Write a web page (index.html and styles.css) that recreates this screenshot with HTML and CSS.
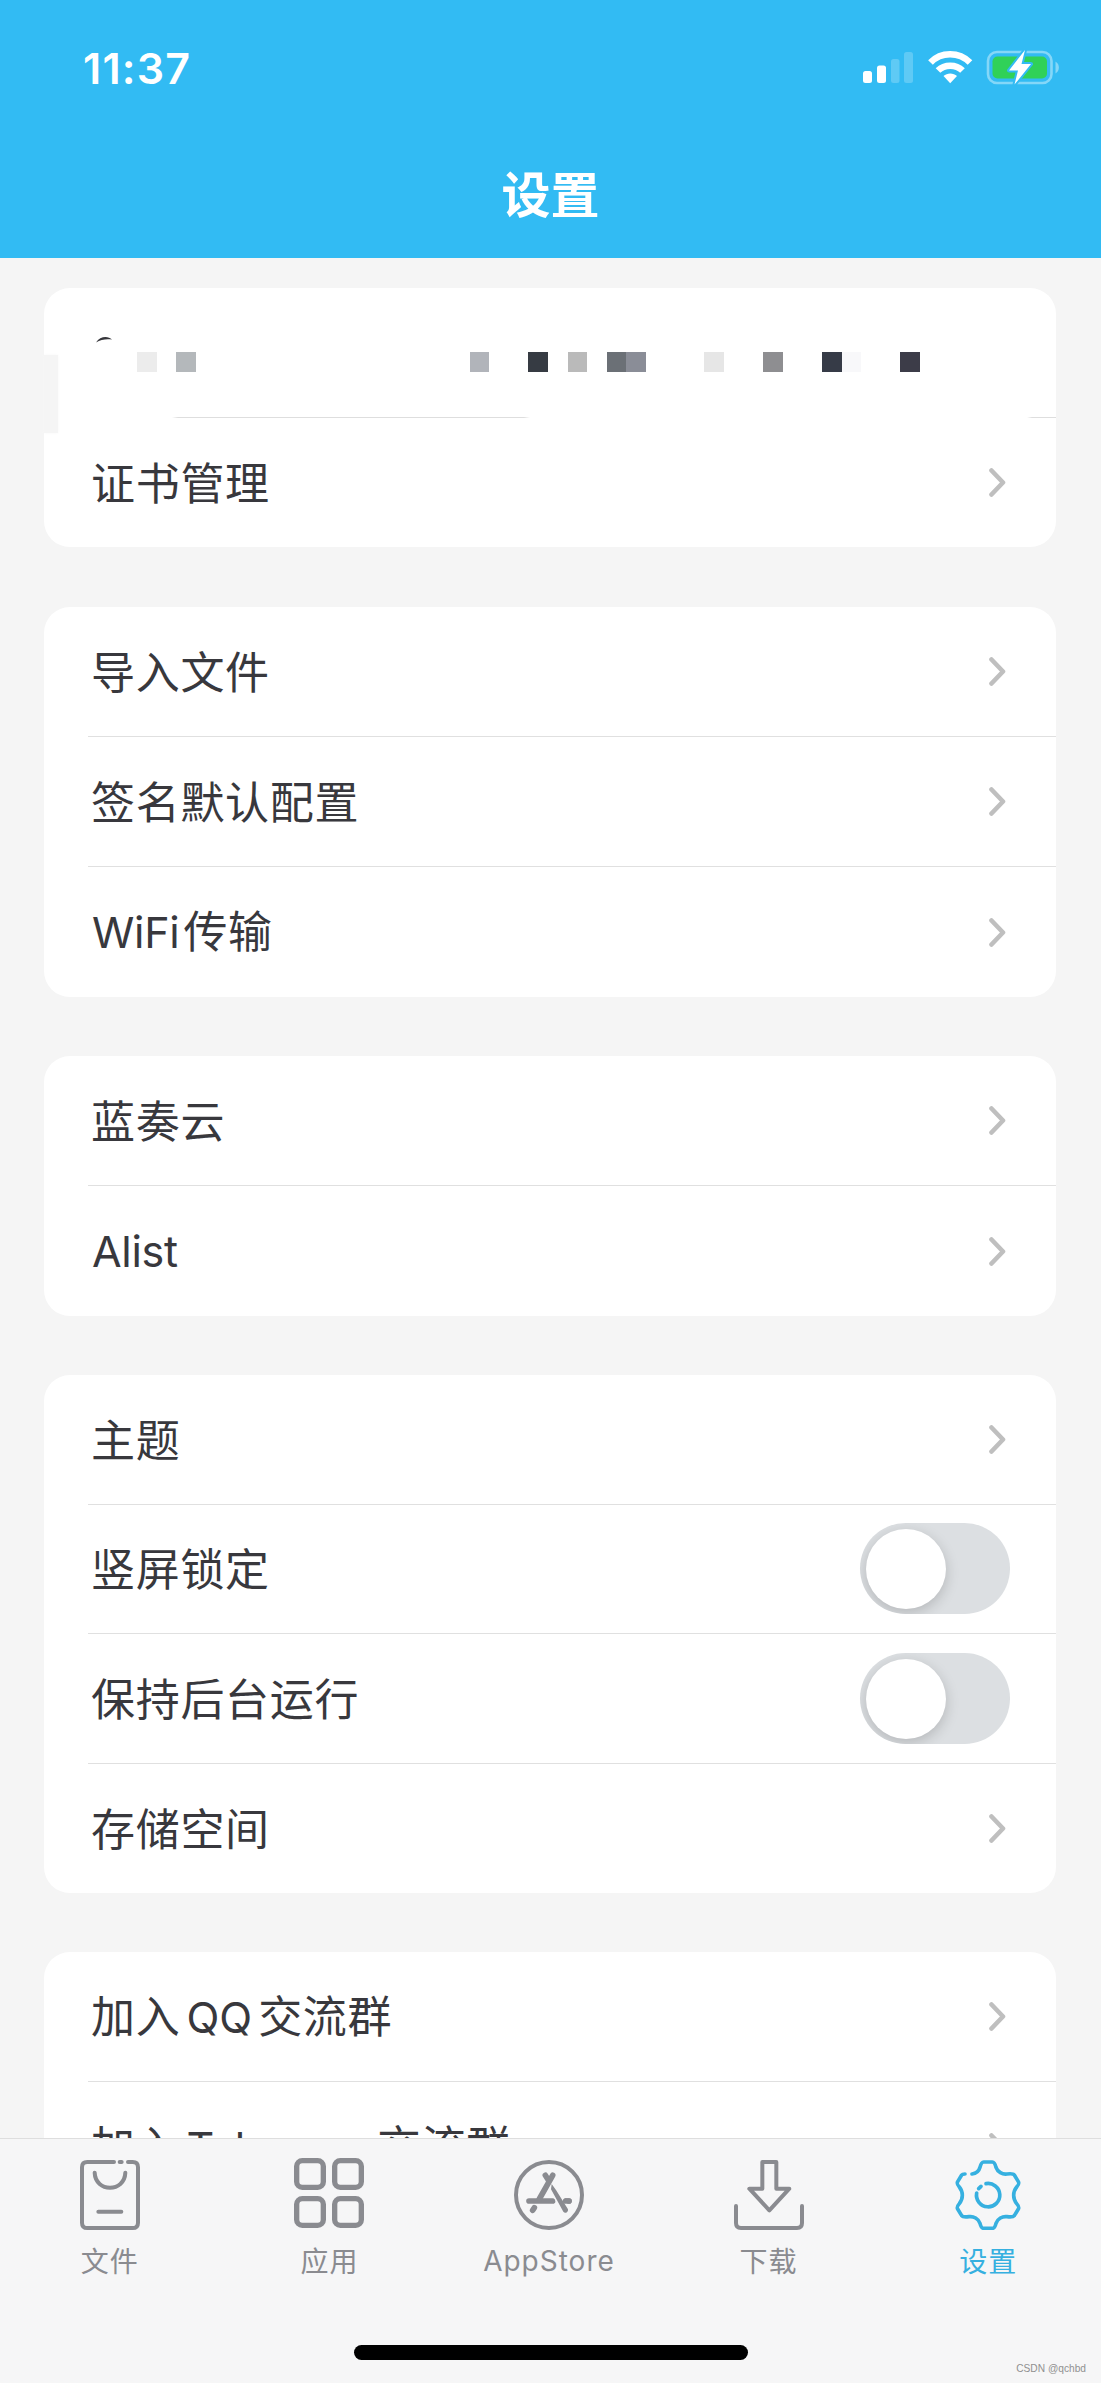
FILE: index.html
```html
<!DOCTYPE html>
<html lang="zh-CN">
<head>
  <meta charset="UTF-8">
  <title>设置</title>
  <link rel="stylesheet" href="styles.css">
</head>
<body>

  <svg class="defs" width="0" height="0">
    <symbol id="chevron" viewBox="0 0 17 29">
      <path d="M2.5 2.5 L14 14.5 L2.5 26.5" fill="none" stroke="currentColor" stroke-width="4.6" stroke-linecap="round" stroke-linejoin="round"/>
    </symbol>
  </svg>

  <header class="header">
    <div class="status">
      <span class="time">11:37</span>
      <svg class="status-icons" width="198" height="36" viewBox="862 50 198 36">
        <!-- 信号 -->
        <g fill="#fff">
          <rect x="863" y="71" width="9" height="12" rx="2.5"/>
          <rect x="877" y="65.5" width="9" height="17.5" rx="2.5"/>
          <rect x="891" y="59" width="8.5" height="24" rx="2.5" opacity=".22"/>
          <rect x="904" y="52" width="9" height="31" rx="2.5" opacity=".22"/>
        </g>
        <!-- wifi -->
        <g fill="none" stroke="#fff" stroke-width="6.5">
          <path d="M930.5 62.5 C941 51.5 959 51.5 970 62.5"/>
          <path d="M938 70.5 C944.5 64 956 64 962.5 70.5"/>
        </g>
        <path d="M943.5 76 C947 72.5 953.5 72.5 957 76 L950.2 83.3 Z" fill="#fff"/>
        <!-- 电池 -->
        <rect x="988" y="52" width="63.5" height="31" rx="9" fill="none" stroke="#84d7f8" stroke-width="2.6"/>
        <rect x="992.5" y="56.5" width="54.5" height="22" rx="5" fill="#30d158"/>
        <path d="M1055.5 61.5 C1060 64 1060 71 1055.5 73.5 Z" fill="#84d7f8"/>
        <path d="M1025 50 L1009 70.5 H1018 L1014.5 84.5 L1031 64 H1021.5 Z" fill="#fff" stroke="#32bbf3" stroke-width="4" paint-order="stroke" stroke-linejoin="round"/>
      </svg>
    </div>
    <h1 class="title">设置</h1>
  </header>

  <main class="content">
    <section class="card card-account">
      <div class="row masked">
        <svg width="1012" height="128" viewBox="44 288 1012 128">
          <path d="M96 342.5 C100 336 108 335.5 112 339.5 C106 338.8 101 339.5 96 342.5 Z" fill="#36363b"/>
          <rect x="137" y="352" width="20" height="20" fill="#ececec"/>
          <rect x="176" y="352" width="20" height="20" fill="#b4b8bb"/>
          <rect x="470" y="352" width="19" height="20" fill="#b1b4ba"/>
          <rect x="528" y="352" width="20" height="20" fill="#363b43"/>
          <rect x="568" y="352" width="19" height="20" fill="#bababa"/>
          <rect x="607" y="352" width="19" height="20" fill="#6b7076"/>
          <rect x="626" y="352" width="20" height="20" fill="#8a8d97"/>
          <rect x="704" y="352" width="20" height="20" fill="#e6e6e6"/>
          <rect x="763" y="352" width="20" height="20" fill="#8e8e91"/>
          <rect x="822" y="352" width="20" height="20" fill="#363b47"/>
          <rect x="842" y="352" width="19" height="20" fill="#f8f8fa"/>
          <rect x="900" y="352" width="20" height="20" fill="#3c3c48"/>
        </svg>
        <div class="broken-line"></div>
      </div>
      <div class="row"><span>证书管理</span><svg class="chevron"><use href="#chevron"/></svg></div>
      <div class="notch"></div>
    </section>

    <section class="card card-files">
      <div class="row"><span>导入文件</span><svg class="chevron"><use href="#chevron"/></svg></div>
      <div class="row"><span>签名默认配置</span><svg class="chevron"><use href="#chevron"/></svg></div>
      <div class="row"><span><span class="latin first">WiFi</span>传输</span><svg class="chevron"><use href="#chevron"/></svg></div>
    </section>

    <section class="card card-cloud">
      <div class="row"><span>蓝奏云</span><svg class="chevron"><use href="#chevron"/></svg></div>
      <div class="row"><span><span class="latin first">Alist</span></span><svg class="chevron"><use href="#chevron"/></svg></div>
    </section>

    <section class="card card-general">
      <div class="row"><span>主题</span><svg class="chevron"><use href="#chevron"/></svg></div>
      <div class="row"><span>竖屏锁定</span><span class="switch"></span></div>
      <div class="row"><span>保持后台运行</span><span class="switch"></span></div>
      <div class="row"><span>存储空间</span><svg class="chevron"><use href="#chevron"/></svg></div>
    </section>

    <section class="card card-groups">
      <div class="row"><span>加入<span class="latin">QQ</span>交流群</span><svg class="chevron"><use href="#chevron"/></svg></div>
      <div class="row"><span>加入<span class="latin telegram">Telegram</span>交流群</span><svg class="chevron"><use href="#chevron"/></svg></div>
    </section>
  </main>

  <nav class="tabbar">
    <a class="tab">
      <svg class="tab-icon" viewBox="0 0 210 210" stroke-width="12">
        <path d="M117 6 H37 Q21 6 21 22 V188 Q21 204 37 204 H173 Q189 204 189 188 V22 Q189 6 173 6 H159"/>
        <path d="M134 6 H140 M59 38 C61 98 149 98 151 38 M70 155 H139"/>
      </svg>
      <span>文件</span>
    </a>
    <a class="tab">
      <svg class="tab-icon icon-apps" viewBox="0 0 210 210" stroke-width="16">
        <rect x="8" y="8" width="80" height="80" rx="17"/>
        <rect x="122" y="8" width="80" height="80" rx="17"/>
        <rect x="8" y="122" width="80" height="80" rx="17"/>
        <rect x="122" y="122" width="80" height="80" rx="17"/>
      </svg>
      <span>应用</span>
    </a>
    <a class="tab">
      <svg class="tab-icon" viewBox="0 0 210 210" stroke-width="17">
        <circle cx="105" cy="105" r="99" stroke-width="12"/>
        <path d="M45 123 H116 M148 123 H165"/>
        <path d="M116 46 L76 117 M94 46 L103 60"/>
        <path d="M61 143 L56 151"/>
        <path d="M119 84 L155 150" stroke="#f6f6f7" stroke-width="27" stroke-linecap="butt"/>
        <path d="M113 72 L126 90 L162 148 A8 8 0 0 1 148 155 L111 88 Z" fill="currentColor" stroke="none"/>
        <path d="M155 123 H165"/>
      </svg>
      <span class="latin-label">AppStore</span>
    </a>
    <a class="tab">
      <svg class="tab-icon" viewBox="0 0 210 210" stroke-width="12">
        <path d="M85 6 H127 V86 H166 L106 151 L46 86 H85 Z"/>
        <path d="M6 138 V189 Q6 204 21 204 H189 Q204 204 204 189 V138"/>
      </svg>
      <span>下载</span>
    </a>
    <a class="tab active">
      <svg class="tab-icon" viewBox="0 0 210 210" stroke-width="11">
        <path d="M57 42 C68 41 78 33 81 22 C84 10 86 6 92 6 H118 C124 6 126 10 129 22 C134 36 148 44 162 42 C177 40 181 41 184 45 L196 65 C199 70 198 73 191 81 C179 96 179 116 191 131 C198 139 199 142 196 147 L184 167 C181 171 177 172 162 170 C148 168 134 176 129 190 C126 202 124 205 118 205 H92 C86 205 84 202 81 190 C76 176 62 168 48 170 C33 172 29 171 26 167 L14 147 C11 142 12 139 19 131 C31 116 31 96 19 81 C12 73 11 70 14 65 L26 45 C28 42 30 42 36 42"/>
        <path d="M99 71 A35 35 0 1 1 71 99 M77 86 L84 79"/>
      </svg>
      <span>设置</span>
    </a>
    <div class="home-indicator"></div>
    <span class="watermark">CSDN @qchbd</span>
  </nav>

</body>
</html>
```
FILE: styles.css
```css
* {
  box-sizing: border-box;
}

body {
  margin: 0;
  width: 1101px;
  height: 2383px;
  display: flex;
  flex-direction: column;
  overflow: hidden;
  background-color: #f5f5f5;
  color: #38383d;
  font-family: "Noto Sans CJK SC", sans-serif;
}

.defs {
  position: absolute;
}

.header {
  height: 258px;
  background-color: #32bbf3;
  color: #fff;
}

.status {
  display: flex;
  justify-content: space-between;
  align-items: center;
  height: 136px;
  padding: 0 41px 0 83px;
}

.time {
  font-family: Inter, sans-serif;
  font-size: 43px;
  font-weight: 600;
  letter-spacing: 1.2px;
}

.title {
  margin: 0;
  font-size: 49px;
  font-weight: 700;
  line-height: 112px;
  text-align: center;
}

.content {
  flex: 1;
  min-height: 0;
  overflow: hidden;
  padding: 30px 45px 0 44px;
}

.card {
  position: relative;
  display: grid;
  grid-auto-rows: 1fr;
  margin-bottom: 59px;
  padding-left: 44px;
  border-radius: 26px;
  background-color: #fff;
}

.card-account { height: 259px; margin-bottom: 60px; }
.card-files { height: 390px; }
.card-cloud { height: 260px; }
.card-general { height: 518px; }
.card-groups { height: 260px; }

.row {
  display: flex;
  justify-content: space-between;
  align-items: center;
  padding: 0 46px 0 3px;
  border-bottom: 1px solid #e0e0e0;
  font-size: 44px;
  letter-spacing: 0.7px;
  line-height: 62px;
}

/* the CJK glyphs sit a little low in their line box */
.row > span:first-child {
  padding-bottom: 3px;
}

.row:last-of-type,
.card-account .row {
  border-bottom: none;
}

.masked {
  flex-direction: column;
  align-items: stretch;
  margin-left: -44px;
  padding: 0;
}

/* separator left over around the masked account line */
.broken-line {
  height: 1px;
  background: linear-gradient(90deg, transparent 128px, #dedede 134px, #dedede 480px, transparent 486px, transparent 983px, #dedede 988px);
}

.notch {
  position: absolute;
  left: 0;
  top: 67px;
  width: 14px;
  height: 78px;
  background-color: #f5f5f5;
  box-shadow: 0 0 3px #f7f7f7;
}

.latin {
  margin: 0 6px;
  font-family: Inter, sans-serif;
  font-size: 43px;
  letter-spacing: 0;
}

.latin.first {
  margin: 0 4px 0 1px;
  letter-spacing: -0.3px;
}

.latin.telegram {
  letter-spacing: -0.6px;
}

.chevron {
  width: 17px;
  height: 29px;
  margin-right: 4px;
  color: #bfbfbf;
}

.switch {
  width: 150px;
  height: 91px;
  padding: 6px;
  border-radius: 46px;
  background-color: #dcdfe2;
  overflow: hidden;
}

.switch::before {
  content: "";
  display: block;
  width: 80px;
  height: 80px;
  border-radius: 50%;
  background-color: #fff;
  box-shadow: 0 4px 14px rgba(0, 0, 0, 0.18);
}

.tabbar {
  position: relative;
  display: flex;
  height: 245px;
  padding-right: 3px;
  border-top: 1px solid #dedede;
  background-color: #f6f6f7;
}

.tab {
  flex: 1;
  display: flex;
  flex-direction: column;
  align-items: center;
  padding-top: 21px;
  color: #8a8b90;
  font-size: 28px;
  letter-spacing: 1px;
  line-height: 40px;
}

.tab.active {
  color: #36b0e0;
}

.tab-icon {
  width: 70px;
  height: 70px;
  margin-bottom: 10px;
  fill: none;
  stroke: currentColor;
  stroke-linecap: round;
  stroke-linejoin: round;
}

.icon-apps {
  margin-top: -2px;
  margin-bottom: 12px;
}

.latin-label {
  padding-top: 1px;
  font-family: Inter, sans-serif;
}

.home-indicator {
  position: absolute;
  left: 354px;
  bottom: 23px;
  width: 394px;
  height: 15px;
  border-radius: 8px;
  background-color: #000;
}

.watermark {
  position: absolute;
  right: 15px;
  bottom: 7px;
  color: #919191;
  font-family: "Liberation Sans", sans-serif;
  font-size: 10.2px;
  line-height: 14px;
}
```
